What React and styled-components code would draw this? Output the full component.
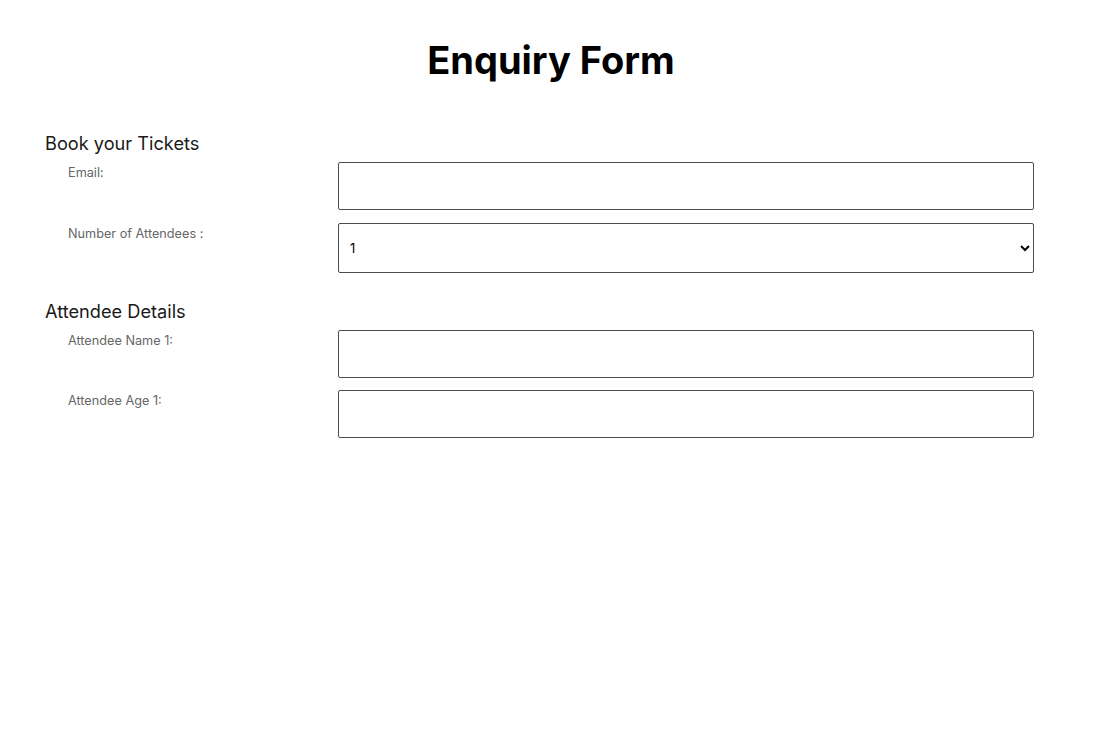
import React, { useState } from 'react'
import styled, { createGlobalStyle } from 'styled-components';

const Global = createGlobalStyle`
  body {
    margin: 0;
    background: #fff;
    font-family: Inter, "Noto Sans", sans-serif;
    color: #000;
  }
`;

const EnquiryForm = () => {
  const [count, setCount] = useState('1');
  const people = Array.from({ length: Number(count) }, (_, i) => i + 1);

  return (
    <Page>
      <Global />
      <Title>Enquiry Form</Title>
      <Section>
        <SectionHead>Book your Tickets</SectionHead>
        <Row>
          <Label>Email:</Label>
          <Input type="email" />
        </Row>
        <Row>
          <Label $offset>Number of Attendees :</Label>
          <Select value={count} onChange={(e) => setCount(e.target.value)}>
            <option value="1">1</option>
            <option value="2">2</option>
            <option value="3">3</option>
            <option value="4">4</option>
          </Select>
        </Row>
      </Section>
      <Section>
        <SectionHead>Attendee Details</SectionHead>
        {people.map((n) => (
          <React.Fragment key={n}>
            <Row>
              <Label>Attendee Name {n}:</Label>
              <Input type="text" />
            </Row>
            <Row>
              <Label>Attendee Age {n}:</Label>
              <Input type="number" />
            </Row>
          </React.Fragment>
        ))}
      </Section>
    </Page>
  )
}

const Page = styled.div`
  padding: 36px 45px 40px;
  display: flex;
  flex-direction: column;
`;
const Title = styled.h1`
  margin: 0 0 47px;
  text-align: center;
  font-size: 38px;
  line-height: 48px;
  font-weight: 700;
`;
const Section = styled.div`
  display: flex;
  flex-direction: column;
  gap: 12px;
  margin-bottom: 26px;
`;
const SectionHead = styled.h2`
  margin: 0 0 -5px;
  font-size: 18.2px;
  line-height: 24px;
  font-weight: 400;
  color: #1a1a1a;
`;
const Row = styled.div`
  display: grid;
  grid-template-columns: 270px 1fr;
  align-items: start;
  padding: 0 23px;
`;
const Label = styled.label`
  font-size: 12.7px;
  line-height: 20px;
  color: #666;
  padding-top: ${(p) => (p.$offset ? '2px' : '1px')};
`;
const Input = styled.input`
  box-sizing: border-box;
  width: 100%;
  height: 48px;
  border: 1px solid #4d4d4d;
  border-radius: 2px;
  padding: 0 10px;
  font-family: Inter, sans-serif;
  font-size: 13px;
  outline: none;
`;
const Select = styled.select`
  box-sizing: border-box;
  width: 100%;
  height: 50px;
  margin-top: 1px;
  border: 1px solid #4d4d4d;
  border-radius: 2px;
  padding: 0 7px;
  background: #fff;
  color: #000;
  font-family: Inter, sans-serif;
  font-size: 13px;
  outline: none;
`;

export default EnquiryForm;
